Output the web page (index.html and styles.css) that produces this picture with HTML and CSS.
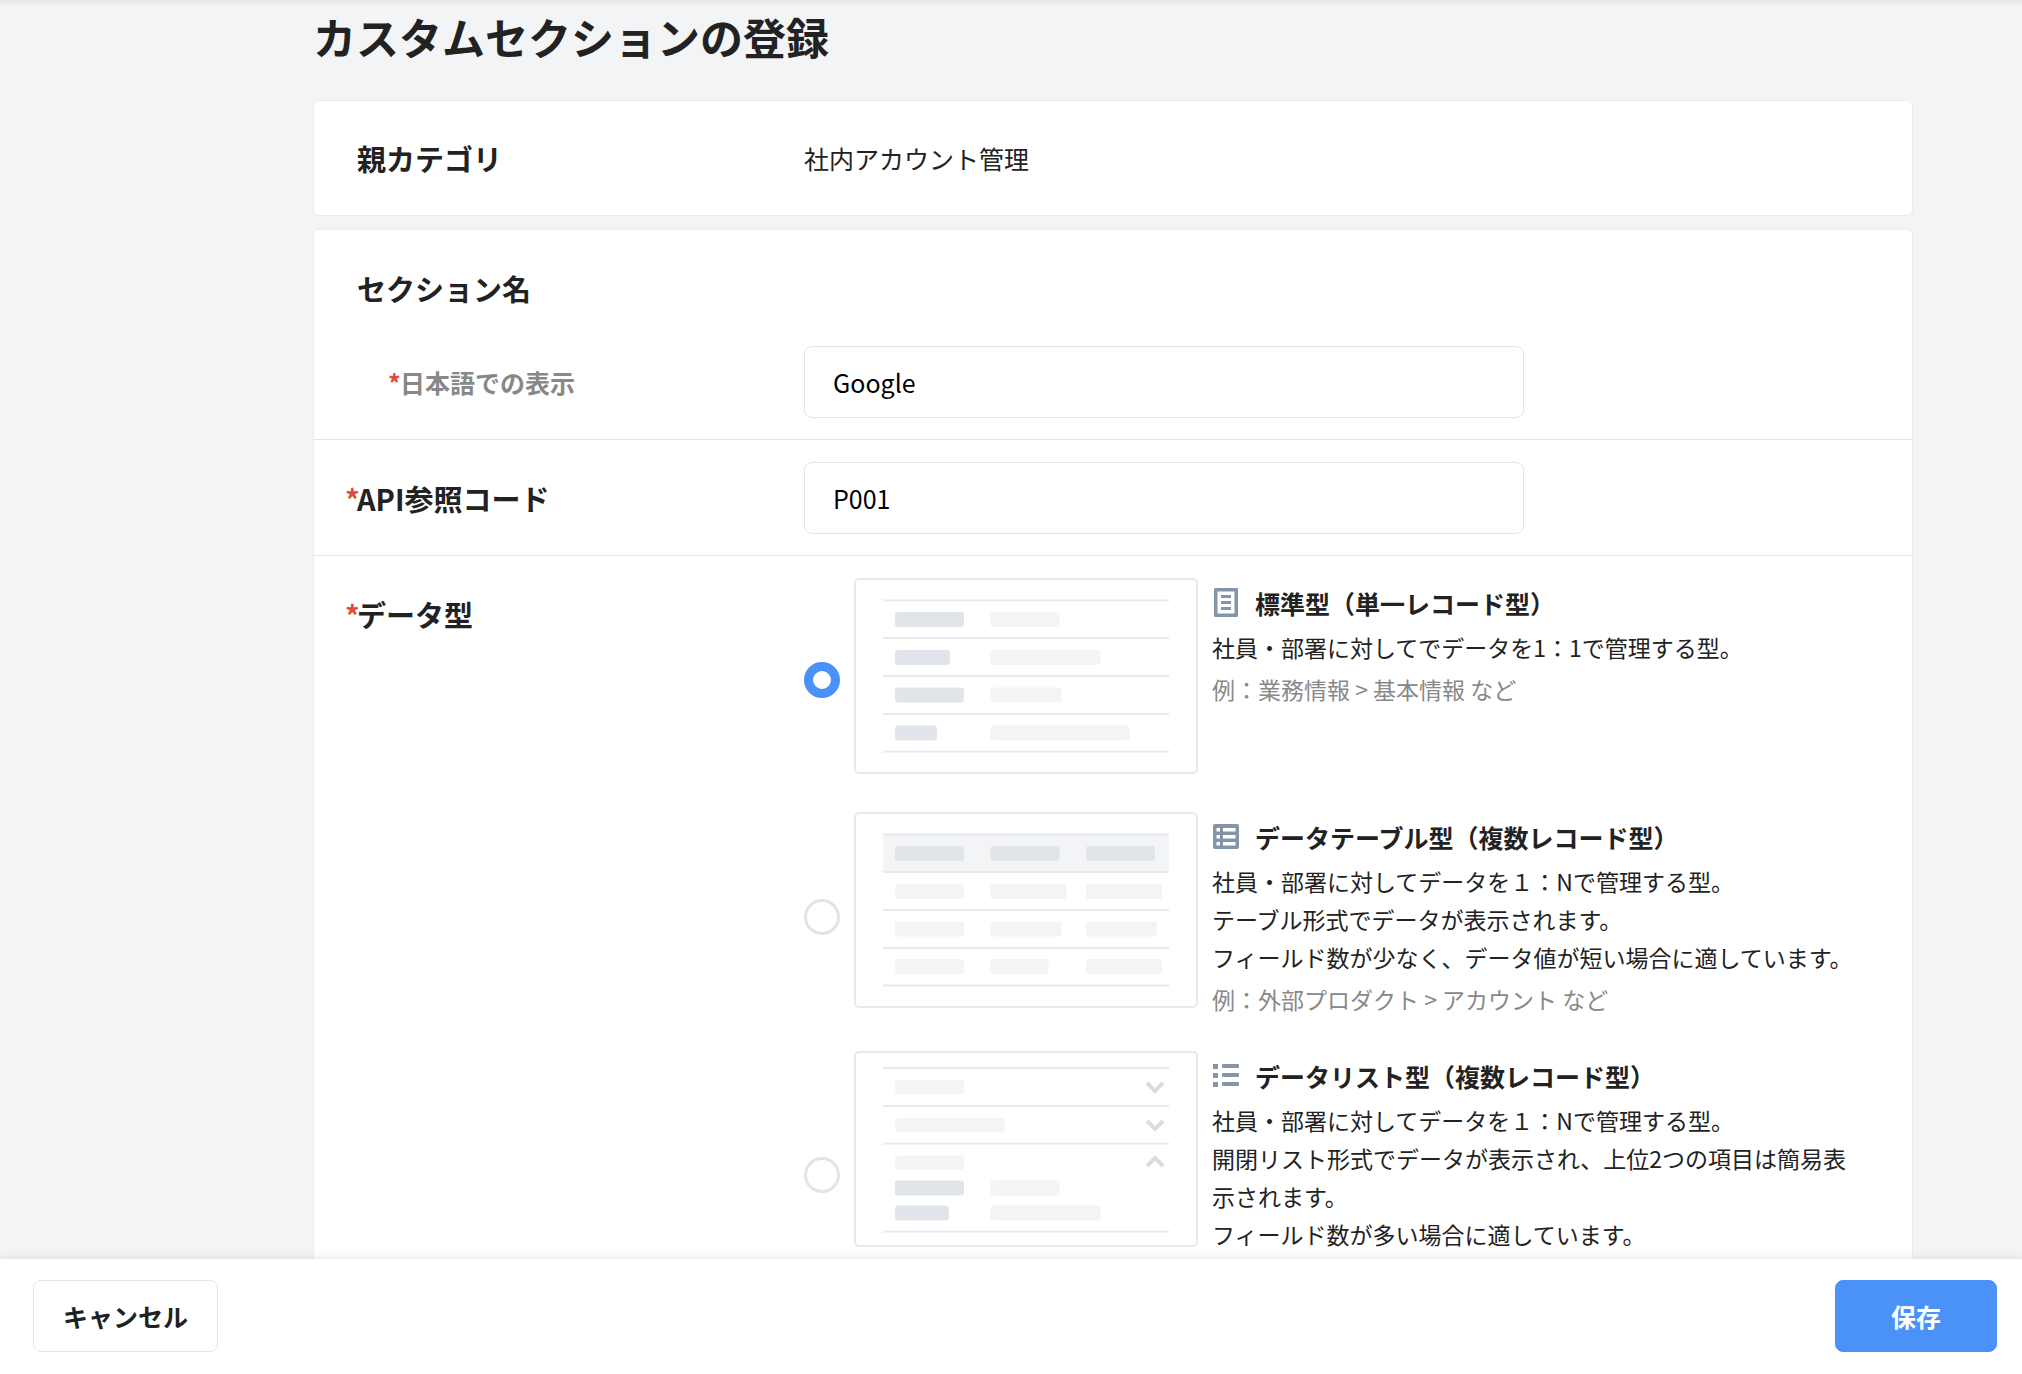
FILE: index.html
```html
<!DOCTYPE html>
<html lang="ja">
<head>
    <meta charset="UTF-8">
    <meta name="viewport" content="width=device-width, initial-scale=1.0">
    <title>カスタムセクションの登録</title>
    <link rel="stylesheet" href="styles.css">
</head>
<body>
    <form class="page">
        <main class="content">
            <h1 class="page-title">カスタムセクションの登録</h1>

            <section class="card">
                <div class="row">
                    <h2 class="label">親カテゴリ</h2>
                    <p class="value">社内アカウント管理</p>
                </div>
            </section>

            <section class="card">
                <div class="row row-heading">
                    <h2 class="label">セクション名</h2>
                </div>
                <div class="row row-sub">
                    <label class="label label-sub" for="name-ja"><span class="required">*</span>日本語での表示</label>
                    <input class="text-input" type="text" id="name-ja" value="Google">
                </div>
                <div class="row">
                    <label class="label" for="api-code"><span class="required">*</span>API参照コード</label>
                    <input class="text-input" type="text" id="api-code" value="P001">
                </div>
                <div class="row">
                    <h2 class="label" id="data-type"><span class="required">*</span>データ型</h2>
                    <div class="options" role="radiogroup" aria-labelledby="data-type">

                        <label class="option">
                            <input class="radio" type="radio" name="type" checked>
                            <svg class="preview" viewBox="0 0 344 196" aria-hidden="true">
                                <path class="line" d="M29 22.5H315M29 60H315M29 98H315M29 136H315M29 173.5H315"/>
                                <g class="dark">
                                    <rect x="41" y="34" width="69" height="15" rx="3"/>
                                    <rect x="41" y="72" width="55" height="15" rx="3"/>
                                    <rect x="41" y="109.5" width="69" height="15" rx="3"/>
                                    <rect x="41" y="147.5" width="42" height="15" rx="3"/>
                                </g>
                                <g class="light">
                                    <rect x="136.5" y="34" width="69" height="15" rx="3"/>
                                    <rect x="136.5" y="72" width="110" height="15" rx="3"/>
                                    <rect x="136.5" y="109.5" width="71" height="15" rx="3"/>
                                    <rect x="136.5" y="147.5" width="139" height="15" rx="3"/>
                                </g>
                            </svg>
                            <span class="option-body">
                                <span class="option-title">
                                    <svg class="icon" viewBox="0 0 28 30" aria-hidden="true">
                                        <path fill-rule="evenodd" d="M4 0H25Q26 0 26 1V28Q26 29 25 29H4Q2 29 2 28V1Q2 0 4 0ZM5.500 3.500V25.500H22.500V3.500ZM9 7H19V10H9ZM9 13H19V16H9ZM9 19H19V22H9Z"/>
                                    </svg>
                                    標準型（単一レコード型）
                                </span>
                                <span class="option-text">社員・部署に対してでデータを1：1で管理する型。</span>
                                <span class="option-example">例：業務情報 &gt; 基本情報 など</span>
                            </span>
                        </label>

                        <label class="option">
                            <input class="radio" type="radio" name="type">
                            <svg class="preview" viewBox="0 0 344 196" aria-hidden="true">
                                <rect class="light" x="29" y="22" width="286" height="38"/>
                                <path class="line" d="M29 22.5H315M29 60H315M29 98H315M29 136H315M29 173.5H315"/>
                                <g class="dark">
                                    <rect x="41" y="34" width="69" height="15" rx="3"/>
                                    <rect x="136.5" y="34" width="69" height="15" rx="3"/>
                                    <rect x="232" y="34" width="69" height="15" rx="3"/>
                                </g>
                                <g class="light">
                                    <rect x="41" y="72" width="69" height="15" rx="3"/>
                                    <rect x="136.5" y="72" width="76" height="15" rx="3"/>
                                    <rect x="232" y="72" width="76" height="15" rx="3"/>
                                    <rect x="41" y="109.5" width="69" height="15" rx="3"/>
                                    <rect x="136.5" y="109.5" width="71" height="15" rx="3"/>
                                    <rect x="232" y="109.5" width="71" height="15" rx="3"/>
                                    <rect x="41" y="147" width="69" height="15" rx="3"/>
                                    <rect x="136.5" y="147" width="58" height="15" rx="3"/>
                                    <rect x="232" y="147" width="76" height="15" rx="3"/>
                                </g>
                            </svg>
                            <span class="option-body">
                                <span class="option-title">
                                    <svg class="icon" viewBox="0 0 28 30" aria-hidden="true">
                                        <path fill-rule="evenodd" d="M3 2H25Q27 2 27 4V25Q27 27 25 27H3Q1 27 1 25V4Q1 2 3 2ZM4.500 6V9.500H8V6ZM11 6V9.500H23.500V6ZM4.500 13V16.500H8V13ZM11 13V16.500H23.500V13ZM4.500 20V23.500H8V20ZM11 20V23.500H23.500V20Z"/>
                                    </svg>
                                    データテーブル型（複数レコード型）
                                </span>
                                <span class="option-text">社員・部署に対してデータを１：Nで管理する型。<br>テーブル形式でデータが表示されます。<br>フィールド数が少なく、データ値が短い場合に適しています。</span>
                                <span class="option-example">例：外部プロダクト &gt; アカウント など</span>
                            </span>
                        </label>

                        <label class="option">
                            <input class="radio" type="radio" name="type">
                            <svg class="preview" viewBox="0 0 344 196" aria-hidden="true">
                                <path class="line" d="M29 17H315M29 55H315M29 92.5H315M29 180.5H315"/>
                                <g class="light">
                                    <rect x="41" y="29" width="69" height="14" rx="3"/>
                                    <rect x="41" y="67" width="110" height="14" rx="3"/>
                                    <rect x="41" y="104.5" width="69" height="14" rx="3"/>
                                    <rect x="136.5" y="129.5" width="69" height="15" rx="3"/>
                                    <rect x="136.5" y="154.5" width="110" height="15" rx="3"/>
                                </g>
                                <g class="dark">
                                    <rect x="41" y="129.5" width="69" height="15" rx="3"/>
                                    <rect x="41" y="154.5" width="54" height="15" rx="3"/>
                                </g>
                                <path class="chevron" d="M293 32L301 40L309 32M293 70L301 78L309 70M293 115L301 107L309 115"/>
                            </svg>
                            <span class="option-body">
                                <span class="option-title">
                                    <svg class="icon" viewBox="0 0 28 30" aria-hidden="true">
                                        <path d="M1 3H6V8H1ZM1 12H6V17H1ZM1 21H6V26H1Z"/>
                                        <rect x="10" y="3" width="17" height="4" rx="1"/>
                                        <rect x="10" y="12" width="17" height="4" rx="1"/>
                                        <rect x="10" y="21" width="17" height="4" rx="1"/>
                                    </svg>
                                    データリスト型（複数レコード型）
                                </span>
                                <span class="option-text">社員・部署に対してデータを１：Nで管理する型。<br>開閉リスト形式でデータが表示され、上位2つの項目は簡易表示されます。<br>フィールド数が多い場合に適しています。</span>
                            </span>
                        </label>

                    </div>
                </div>
            </section>
        </main>

        <footer class="footer">
            <button class="button" type="button">キャンセル</button>
            <button class="button button-primary" type="submit">保存</button>
        </footer>
    </form>
</body>
</html>
```
FILE: styles.css
```css
:root {
    --text: #222;
    --muted: #888;
    --primary: #4a91f8;
    --required: #e5483f;
    --border: #e1e5ea;
    --background: #f3f4f6;
    --icon: #8595a9;
}

* {
    margin: 0;
    padding: 0;
    box-sizing: border-box;
}

body {
    background-color: var(--background);
    color: var(--text);
    font-family: "Noto Sans CJK JP", sans-serif;
    font-size: 25px;
}

.page {
    display: flex;
    flex-direction: column;
    height: 100vh;
}

.content {
    flex: 1;
    min-height: 0;
    overflow-y: auto;
    scrollbar-width: none;
    padding: 4px 109px 0 313px;
    box-shadow: inset 0 8px 8px -8px rgba(0, 0, 0, 0.12);
}

.page-title {
    font-size: 43px;
    line-height: 64px;
    margin-bottom: 32px;
}

.card {
    background: #fff;
    border: 1px solid #eaebed;
    border-radius: 6px;
    margin-bottom: 13px;
}

.row {
    display: grid;
    grid-template-columns: 447px minmax(0, 1fr);
    padding: 21px 50px 21px 43px;
    border-bottom: 1px solid var(--border);
}

.row:last-child {
    border-bottom: none;
}

.row-heading {
    padding-top: 22px;
    padding-bottom: 22px;
    border-bottom: none;
}

.row-sub {
    padding-top: 0;
}

.row-sub ~ .row {
    padding-top: 22px;
}

.label {
    font-size: 29px;
    font-weight: bold;
    line-height: 72px;
}

.label-sub {
    padding-left: 43px;
    font-size: 25px;
    color: var(--muted);
}

.required {
    display: inline-block;
    width: 12px;
    margin-left: -12px;
    color: var(--required);
}

.value {
    line-height: 72px;
}

.text-input {
    width: 720px;
    max-width: 100%;
    height: 72px;
    padding: 0 28px;
    border: 1px solid var(--border);
    border-radius: 8px;
    font: inherit;
    color: #000;
}

.options {
    display: flex;
    flex-direction: column;
    gap: 30px;
}

.option {
    display: flex;
    align-items: center;
    gap: 14px;
    min-height: 204px;
}

.option:last-child {
    min-height: 248px;
}

.radio {
    appearance: none;
    flex: none;
    width: 36px;
    height: 36px;
    border: 3px solid var(--border);
    border-radius: 50%;
    background: #fff;
}

.radio:checked {
    border: 9px solid var(--primary);
}

.preview {
    flex: none;
    align-self: flex-start;
    width: 344px;
    height: 196px;
    border-radius: 5px;
    box-shadow: inset 0 0 0 2px #e6e9ed;
}

.line {
    stroke: #e6e9ed;
    stroke-width: 2;
}

.dark {
    fill: #e1e4e9;
}

.light {
    fill: #f3f4f6;
}

.chevron {
    fill: none;
    stroke: #d8dde3;
    stroke-width: 4;
}

.option-body {
    flex: 1;
    align-self: flex-start;
    min-width: 0;
    padding: 3px 0;
}

.option-title {
    display: flex;
    align-items: center;
    gap: 15px;
    margin-bottom: 3px;
    font-weight: bold;
    line-height: 44px;
}

.icon {
    width: 28px;
    height: 30px;
    fill: var(--icon);
}

.option-text,
.option-example {
    display: block;
    font-size: 23px;
    line-height: 38px;
}

.option-example {
    margin-top: 4px;
    color: var(--muted);
}

.footer {
    display: flex;
    justify-content: space-between;
    padding: 21px 25px 22px 33px;
    background: #fff;
    box-shadow: 0 0 10px rgba(0, 0, 0, 0.12);
    z-index: 1;
}

.button {
    height: 72px;
    padding: 0 29px;
    border: 1px solid var(--border);
    border-radius: 8px;
    background: #fff;
    color: var(--text);
    font: inherit;
    font-weight: bold;
}

.button-primary {
    padding: 0 55px;
    border-color: var(--primary);
    background: var(--primary);
    color: #fff;
}
```
